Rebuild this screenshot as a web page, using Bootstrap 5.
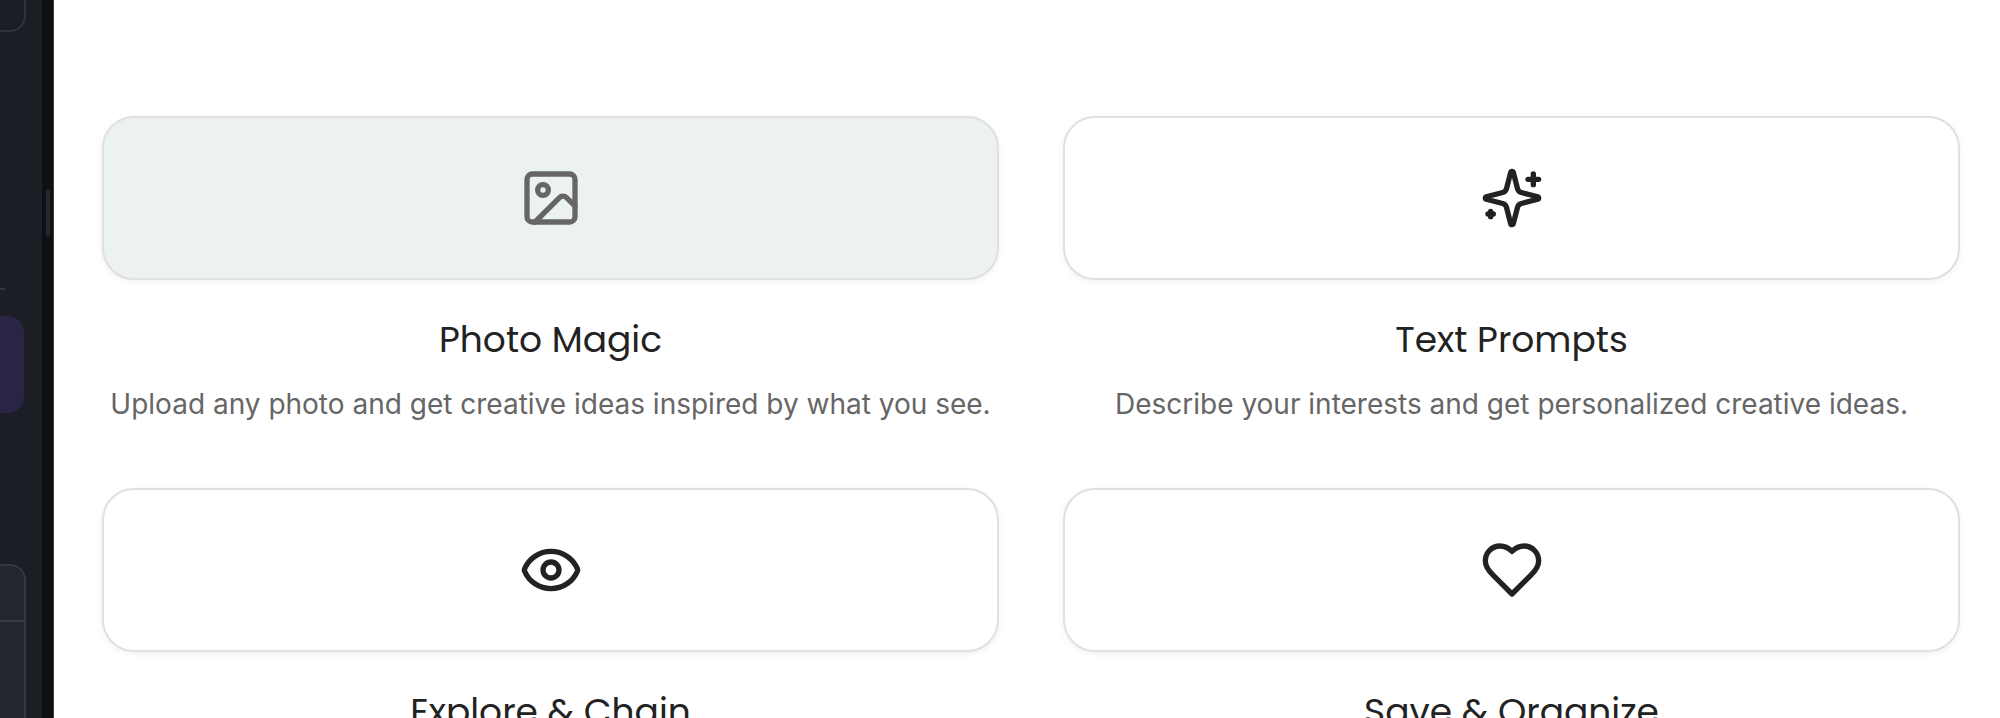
<!DOCTYPE html>
<html lang="en">
<head>
<meta charset="utf-8">
<title>Creative ideas</title>
<link href="https://cdn.jsdelivr.net/npm/bootstrap@5.3.0/dist/css/bootstrap.min.css" rel="stylesheet">
<style>
  body { font-family: Inter, "Liberation Sans", sans-serif; color: #222; background: #fff; }
  .side { width: 42px; background: #1b1e25; }
  .side-box { width: 26px; border: 2px solid #2c3636; border-left: 0; }
  .box-top { height: 32px; border-top: 0; border-radius: 0 0 16px 0; }
  .side-rule { width: 5px; height: 2px; margin-top: 256px; background: #36383e; }
  .side-pill { width: 24px; height: 97px; margin-top: 26px; border-radius: 0 16px 16px 0; background: #2a2544; }
  .box-panel { margin-top: 151px; border-color: #363940; border-bottom: 0; border-radius: 0 16px 0 0; background: #23262e; }
  .panel-head { height: 54px; border-bottom: 2px solid #3b3e45; box-sizing: content-box; }
  .gutter { width: 12px; background: #0e1014; border-right: 1px solid #393b3d; padding: 189px 3px 0 4px; }
  .thumb { height: 48px; border-radius: 2px; background: #26262f; }
  .features { padding: 116px 40px 0 48px; display: grid; grid-template-columns: 1fr 1fr; grid-auto-rows: 372px; column-gap: 64px; }
  .tile { height: 164px; border: 2px solid #e0e0e0; border-radius: 32px; box-shadow: 0 2px 6px rgba(0,0,0,.06); }
  .tile-active { background: #ecf3ee; color: #666; }
  .tile svg { width: 64px; height: 64px; fill: none; stroke: currentColor; stroke-width: 2; stroke-linecap: round; stroke-linejoin: round; }
  .title { font-family: Poppins, Inter, sans-serif; font-size: 36px; line-height: 56px; font-weight: 400; margin: 32px 0 0; white-space: nowrap; }
  .desc { font-size: 28px; line-height: 46px; color: #666; margin: 13px -20px 0; white-space: nowrap; }
</style>
</head>
<body class="vh-100 overflow-hidden d-flex">
<aside class="side flex-shrink-0 d-flex flex-column">
  <div class="side-box box-top flex-shrink-0"></div>
  <div class="side-rule flex-shrink-0"></div>
  <div class="side-pill flex-shrink-0"></div>
  <div class="side-box box-panel flex-grow-1"><div class="panel-head"></div></div>
</aside>
<div class="gutter flex-shrink-0"><div class="thumb"></div></div>
<main class="features flex-grow-1 text-center">
  <section>
    <div class="tile tile-active d-flex align-items-center justify-content-center">
      <svg viewBox="0 0 24 24"><rect x="3" y="3" width="18" height="18" rx="2"/><circle cx="9" cy="9" r="2"/><path d="m21 15-3.086-3.086a2 2 0 0 0-2.828 0L6 21"/></svg>
    </div>
    <h3 class="title">Photo Magic</h3>
    <p class="desc">Upload any photo and get creative ideas inspired by what you see.</p>
  </section>
  <section>
    <div class="tile d-flex align-items-center justify-content-center">
      <svg viewBox="0 0 24 24"><path d="M9.937 15.5A2 2 0 0 0 8.5 14.063l-6.135-1.582a.5.5 0 0 1 0-.962L8.5 9.936A2 2 0 0 0 9.937 8.5l1.582-6.135a.5.5 0 0 1 .963 0L14.063 8.5A2 2 0 0 0 15.5 9.937l6.135 1.581a.5.5 0 0 1 0 .964L15.5 14.063a2 2 0 0 0-1.437 1.437l-1.582 6.135a.5.5 0 0 1-.963 0z"/><path d="M20 3v4M22 5h-4M4 17v2M5 18H3"/></svg>
    </div>
    <h3 class="title">Text Prompts</h3>
    <p class="desc">Describe your interests and get personalized creative ideas.</p>
  </section>
  <section>
    <div class="tile d-flex align-items-center justify-content-center">
      <svg viewBox="0 0 24 24"><path d="M2.062 12.348a1 1 0 0 1 0-.696 10.75 10.75 0 0 1 19.876 0 1 1 0 0 1 0 .696 10.75 10.75 0 0 1-19.876 0"/><circle cx="12" cy="12" r="3"/></svg>
    </div>
    <h3 class="title">Explore &amp; Chain</h3>
  </section>
  <section>
    <div class="tile d-flex align-items-center justify-content-center">
      <svg viewBox="0 0 24 24"><path d="M19 14c1.49-1.46 3-3.21 3-5.5A5.5 5.5 0 0 0 16.5 3c-1.76 0-3 .5-4.5 2-1.5-1.5-2.74-2-4.5-2A5.5 5.5 0 0 0 2 8.5c0 2.3 1.5 4.05 3 5.5l7 7Z"/></svg>
    </div>
    <h3 class="title">Save &amp; Organize</h3>
  </section>
</main>
<script src="https://cdn.jsdelivr.net/npm/bootstrap@5.3.0/dist/js/bootstrap.bundle.min.js"></script>
</body>
</html>
